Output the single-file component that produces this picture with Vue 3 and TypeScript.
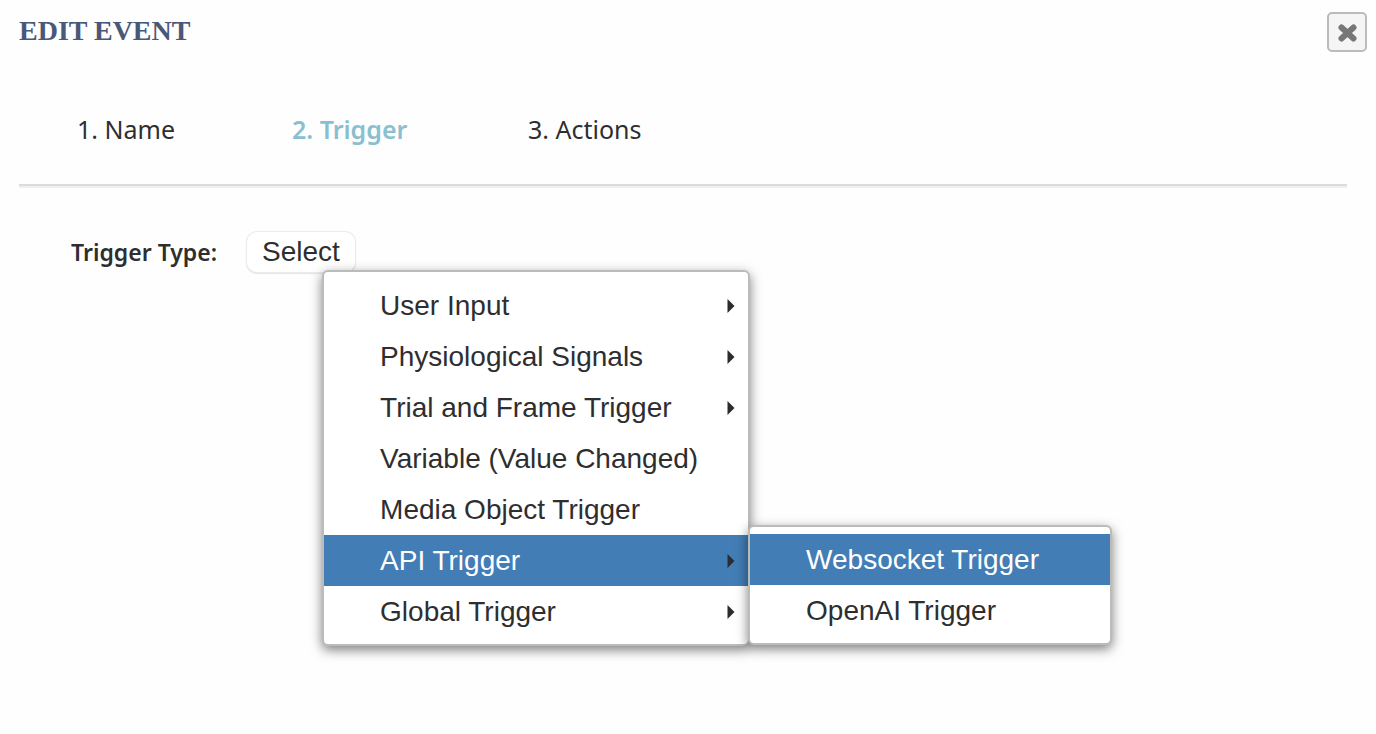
<script setup lang="ts">
import { ref } from 'vue'

interface MenuEntry {
  label: string
  submenu?: boolean
  children?: string[]
}

const steps: string[] = ['1. Name', '2. Trigger', '3. Actions']
const currentStep = ref(1)

const entries: MenuEntry[] = [
  { label: 'User Input', submenu: true },
  { label: 'Physiological Signals', submenu: true },
  { label: 'Trial and Frame Trigger', submenu: true },
  { label: 'Variable (Value Changed)' },
  { label: 'Media Object Trigger' },
  { label: 'API Trigger', submenu: true, children: ['Websocket Trigger', 'OpenAI Trigger'] },
  { label: 'Global Trigger', submenu: true },
]
const activeEntry = ref('API Trigger')
const activeChild = ref('Websocket Trigger')
const menuOpen = ref(true)
</script>

<template>
  <main class="dialog">
    <header class="header">
      <h1 class="title">EDIT EVENT</h1>
      <button class="close" type="button" aria-label="Close">
        <svg width="22" height="22" viewBox="0 0 22 22" aria-hidden="true">
          <path d="M5.5 6.5 17.5 17.5M17.5 6.5 5.5 17.5" fill="none" stroke="#777" stroke-width="6" stroke-linecap="round" />
        </svg>
      </button>
    </header>

    <nav class="steps">
      <button
        v-for="(step, i) in steps"
        :key="step"
        type="button"
        class="step"
        :class="{ current: i === currentStep }"
        @click="currentStep = i"
      >{{ step }}</button>
    </nav>

    <section class="field">
      <label class="label" for="trigger-type">Trigger Type:</label>
      <div class="picker">
        <button id="trigger-type" class="select" type="button" aria-haspopup="menu" @click="menuOpen = !menuOpen">Select</button>
        <ul v-if="menuOpen" class="menu main-menu" role="menu">
          <li v-for="entry in entries" :key="entry.label" class="row" role="none">
            <button
              type="button"
              role="menuitem"
              class="item"
              :class="{ active: entry.label === activeEntry }"
              @click="activeEntry = entry.label"
            >
              {{ entry.label }}
              <svg v-if="entry.submenu" class="arrow" width="8" height="14" viewBox="0 0 8 14" aria-hidden="true">
                <path d="M0.5 0 7.5 7 0.5 14Z" fill="#2c2c2e" />
              </svg>
            </button>
            <ul v-if="entry.children && entry.label === activeEntry" class="menu sub-menu" role="menu">
              <li v-for="child in entry.children" :key="child" class="row" role="none">
                <button
                  type="button"
                  role="menuitem"
                  class="item"
                  :class="{ active: child === activeChild }"
                  @click="activeChild = child"
                >{{ child }}</button>
              </li>
            </ul>
          </li>
        </ul>
      </div>
    </section>
  </main>
</template>

<style>
body {
  margin: 0;
  background: #fefefe;
}
</style>

<style scoped>
.dialog {
  min-height: 100vh;
  color: #2e2e30;
  font-family: "Noto Sans", sans-serif;
}
button {
  margin: 0;
  border: 0;
  background: none;
  color: inherit;
  font: inherit;
  cursor: pointer;
}
.header {
  display: flex;
  justify-content: space-between;
  align-items: flex-start;
  padding: 12px 9px 0 19px;
}
.title {
  margin: 0;
  color: #4a5878;
  font: bold 28px/38px "Liberation Serif", serif;
}
.close {
  display: flex;
  align-items: center;
  justify-content: center;
  width: 40px;
  height: 40px;
  padding: 0;
  border: 2px solid #bbb;
  border-radius: 5px;
  background: #f5f5f5;
}
.steps {
  display: grid;
  grid-template-columns: 215px 236px auto;
  justify-content: start;
  margin: 0 29px 0 19px;
  padding: 58px 58px 36px;
  border-bottom: 2px solid #dcdcdc;
  box-shadow: 0 2px #efefef;
}
.step {
  padding: 0;
  font-size: 25px;
  line-height: 38px;
  text-align: left;
}
.step.current {
  color: #89c0d0;
  font-weight: 600;
}
.field {
  display: flex;
  align-items: center;
  gap: 30px;
  padding: 46px 71px;
}
.label {
  font-size: 23px;
  font-weight: 600;
  line-height: 40px;
}
.picker {
  position: relative;
}
.select {
  display: block;
  padding: 0 15px;
  border-radius: 10px;
  background: #fff;
  box-shadow: 0 0 0 1px #ececec, 0 1px 2px #aaa;
  font: 28px/40px "Liberation Sans", Arial, sans-serif;
}
.menu {
  position: absolute;
  box-sizing: border-box;
  margin: 0;
  border: 2px solid #bbb;
  border-radius: 6px;
  background: #fff;
  box-shadow: 0 4px 12px rgba(0, 0, 0, 0.5);
  list-style: none;
  font: 28px/51px "Liberation Sans", Arial, sans-serif;
  white-space: nowrap;
}
.main-menu {
  top: 38px;
  left: 75px;
  min-width: 428px;
  padding: 8px 0 7px;
}
.sub-menu {
  top: -10px;
  left: 100%;
  min-width: 364px;
  padding: 7px 0;
}
.row {
  position: relative;
}
.item {
  display: flex;
  align-items: center;
  justify-content: space-between;
  width: 100%;
  padding: 0 13px 0 56px;
  text-align: left;
}
.item.active {
  background: #427db5;
  color: #fff;
}
.arrow {
  flex: none;
}
</style>
